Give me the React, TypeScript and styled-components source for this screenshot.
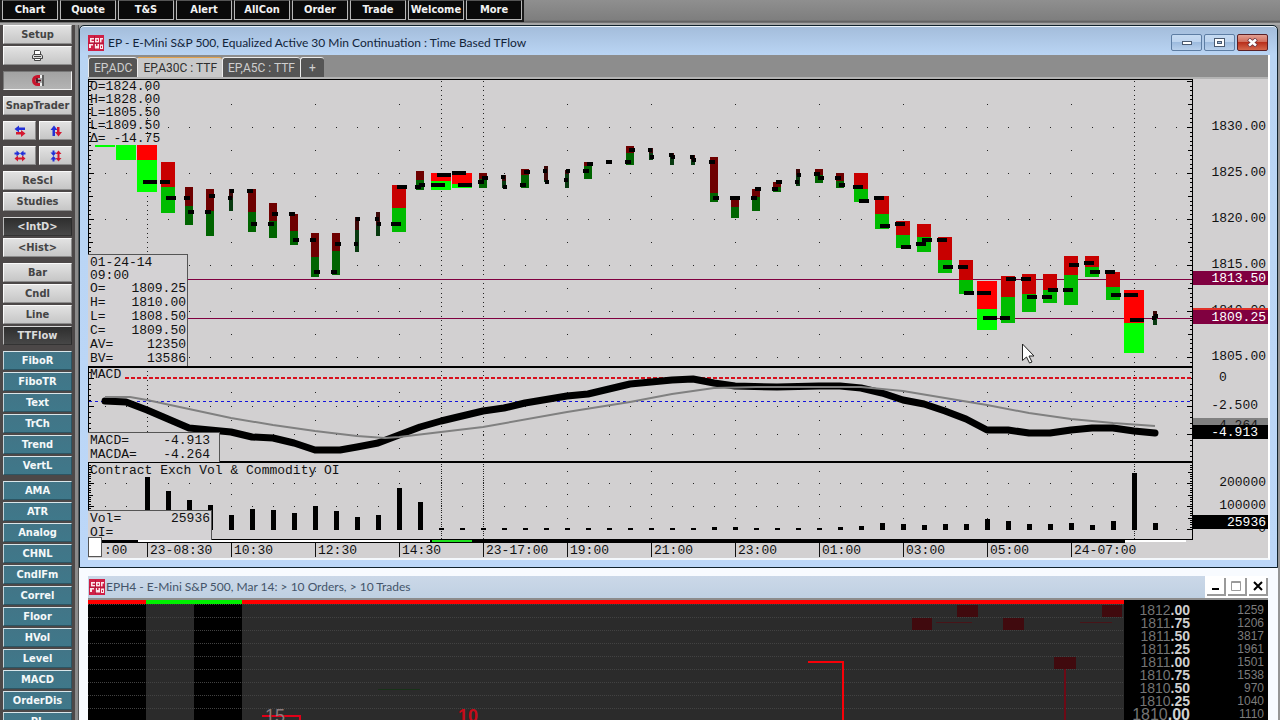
import React from "react";
import styled, { createGlobalStyle, css } from "styled-components";

const GlobalStyle = createGlobalStyle`
  *, *::before, *::after { box-sizing: border-box; }
  body { margin: 0; background: #969696; }
  button { font: inherit; padding: 0; margin: 0; cursor: pointer; }
`;

const mono = `"Liberation Mono", "DejaVu Sans Mono", monospace`;
const ui = `"DejaVu Sans Condensed", "DejaVu Sans", sans-serif`;
const caption = `Lato, "Open Sans", sans-serif`;

/* ---------- shell ---------- */

const Shell = styled.div`
  height: 100vh;
  display: flex;
  flex-direction: column;
  overflow: hidden;
  background: #969696;
`;

const TopBar = styled.nav`
  flex: none;
  height: 25px;
  display: flex;
  align-items: flex-start;
  background: linear-gradient(#8f8f8f, #7e7e7e 80%, #5a5a5a 88%, #a8a8a8 94%);
`;

const TopGroup = styled.div`
  display: flex;
  gap: 2px;
  padding: 0 2px 2px;
  background: #1a1a1a;
`;

const TopButton = styled.button`
  width: 56px;
  height: 20px;
  border: 1px solid #b8b8b8;
  border-top-color: #555;
  background: #0a0a0a;
  color: #f2f2f2;
  font: bold 11px/18px ${ui};
`;

const Body = styled.div`
  flex: 1;
  min-height: 0;
  display: flex;
`;

const Sidebar = styled.aside`
  flex: none;
  width: 79px;
  padding: 0 7px 0 3px;
  display: flex;
  flex-direction: column;
  gap: 6px;
  overflow: hidden;
  background: linear-gradient(90deg, #4c4848 0 75px, #8a8a8a 75px 78px, #555 78px);
`;

const ToolGroup = styled.div`
  flex: none;
  display: flex;
  flex-direction: column;
  gap: 2px;
`;

const ToolPair = styled.div`
  flex: none;
  display: flex;
  gap: 3px;
`;

type Tone = "light" | "pressed" | "dark" | "teal";

const tones = {
  light: css`
    background: linear-gradient(#e2e2e2, #c6c6c6);
    color: #444;
    border-color: #fafafa #8c8c8c #8c8c8c #fafafa;
  `,
  pressed: css`
    background: linear-gradient(#a2a2a2, #b4b4b4);
    color: #444;
    border-color: #777 #f2f2f2 #f2f2f2 #777;
  `,
  dark: css`
    background: linear-gradient(#2e2e2e, #474747);
    color: #dcdcdc;
    border-color: #d8d8d8 #2c2c2c #333 #b8b8b8;
  `,
  teal: css`
    background: linear-gradient(#427587, #3f788a);
    color: #f4f8f9;
    border-color: #d9e6ea #2c5563 #2c5563 #c2d4da;
  `,
};

const ToolButton = styled.button<{ $tone: Tone }>`
  flex: 1;
  width: 100%;
  min-height: 19px;
  height: 19px;
  display: flex;
  align-items: center;
  justify-content: center;
  border: 1px solid;
  font: bold 11px/17px ${ui};
  ${(p) => tones[p.$tone]}
`;

const Workspace = styled.main`
  flex: 1;
  min-width: 0;
  margin-right: 2px;
  display: flex;
  flex-direction: column;
`;

/* ---------- chart window ---------- */

const ChartWindow = styled.section`
  flex: none;
  border: 1px solid #10222c;
  border-radius: 5px 5px 0 0;
  padding: 0 7px 7px 8px;
  background: linear-gradient(#a3bcda, #b9d4f3 28px, #bcd7f8);
  box-shadow: inset 0 1px 0 #eaf3fb;
`;

const TitleBar = styled.header`
  height: 29px;
  padding: 4px 2px 0 0;
  display: flex;
  align-items: center;
  gap: 4px;
`;

const Title = styled.h1`
  flex: 1;
  margin: 0;
  white-space: nowrap;
  overflow: hidden;
  color: #12243a;
  font: 400 12px/18px ${caption};
`;

const WinButtons = styled.div`
  display: flex;
  gap: 2px;
`;

const GlassButton = styled.button<{ $danger?: boolean }>`
  width: 31px;
  height: 17px;
  display: flex;
  align-items: center;
  justify-content: center;
  border: 1px solid ${(p) => (p.$danger ? "#5a2026" : "#5d7da3")};
  border-radius: 2px;
  background: ${(p) =>
    p.$danger
      ? "linear-gradient(#e3a093, #cf6a58 48%, #b9301c 50%, #d4674c)"
      : "linear-gradient(#c6dbf2, #bcd3ee 48%, #9dbbde 50%, #b8d0ec)"};
`;

const Client = styled.div`
  border-right: 2px solid #fff;
  border-bottom: 2px solid #f4f8fc;
  background: #d2d0d1;
`;

const TabBar = styled.div`
  height: 22px;
  padding-top: 2px;
  display: flex;
  background: #8d8d8d;
`;

const Tab = styled.button<{ $active?: boolean }>`
  height: 20px;
  padding: 0 5px;
  border: solid #ececec;
  border-width: 1px 0 0 1px;
  border-top-color: ${(p) => (p.$active ? "#e2a24c" : "#ececec")};
  border-radius: 3px 3px 0 0;
  background: ${(p) => (p.$active ? "#c9c9c9" : "#555")};
  color: ${(p) => (p.$active ? "#2e2e2e" : "#cfcfcf")};
  font: 12px/16px Roboto, "Liberation Sans", sans-serif;
  white-space: pre;
`;

const TabEdge = styled.div`
  height: 2px;
  background: #b4b4b4;
`;

const ChartArea = styled.div`
  display: flex;
  color: #111;
  font: 13px/14px ${mono};
`;

const PlotColumn = styled.div`
  flex: 1;
  min-width: 0;
`;

const PlotCanvas = styled.div`
  position: relative;
  height: 464px;
`;

const PlotSvg = styled.svg`
  display: block;
  width: 100%;
  height: 100%;
`;

const Overlay = styled.div<{ $top: number }>`
  position: absolute;
  left: 2px;
  top: ${(p) => p.$top}px;
  white-space: pre;
`;

const SessionQuote = styled(Overlay)`
  line-height: 13px;
`;

const Readout = styled.dl<{ $top: number; $width: number }>`
  position: absolute;
  left: 0;
  top: ${(p) => p.$top}px;
  width: ${(p) => p.$width}px;
  margin: 0;
  padding: 1px 1px 0 2px;
  border: 1px solid #555;
  border-width: 1px 1px 0 0;
  background: #d4d2d4;
`;

const ReadoutRow = styled.div<{ $inset?: boolean; $tight?: boolean }>`
  height: ${(p) => (p.$tight ? 13 : 14)}px;
  line-height: ${(p) => (p.$tight ? 13 : 14)}px;
  display: flex;
  justify-content: space-between;
  padding-right: ${(p) => (p.$inset ? 8 : 0)}px;
  dt, dd { margin: 0; }
`;

const TimeAxis = styled.div`
  height: 15px;
  display: grid;
  grid-template-columns: 59fr repeat(12, 84fr) 38fr;
  line-height: 15px;
`;

const TimeLabel = styled.span`
  height: 14px;
  padding-left: 2px;
  border-left: 1px solid #111;
  white-space: nowrap;
`;

const TimeStart = styled.span`
  display: flex;
  gap: 2px;
`;

const ScrollKnob = styled.i`
  position: relative;
  width: 14px;
  height: 20px;
  margin-top: -6px;
  border: 1px solid #555;
  background: #fff;
`;

const ScaleColumn = styled.div`
  flex: none;
  width: 75px;
`;

const Scale = styled.div<{ $height: number; $top: number; $gap: number; $inset?: number }>`
  position: relative;
  height: ${(p) => p.$height}px;
  padding: ${(p) => p.$top}px ${(p) => p.$inset ?? 2}px 0 0;
  display: flex;
  flex-direction: column;
  gap: ${(p) => p.$gap}px;
  overflow: hidden;
  text-align: right;
  white-space: pre;
`;

const ScaleTag = styled.span<{ $top: number; $bg: string; $color?: string; $inset?: number; $line?: boolean }>`
  position: absolute;
  left: 0;
  right: 0;
  top: ${(p) => p.$top}px;
  height: 14px;
  padding-right: ${(p) => p.$inset ?? 2}px;
  background: ${(p) => p.$bg};
  color: ${(p) => p.$color ?? "#fff"};
  line-height: 15px;
  box-shadow: ${(p) => (p.$line ? "0 -2px 0 #e03028" : "none")};
`;

/* ---------- order window ---------- */

const OrderWindow = styled.section`
  flex: 1;
  min-height: 0;
  display: flex;
  flex-direction: column;
  padding: 8px 10px 0 9px;
  background: #f8fbff;
`;

const OrderTitleBar = styled.header`
  flex: none;
  height: 22px;
  display: flex;
  align-items: center;
  gap: 1px;
  padding-left: 1px;
  background: linear-gradient(#cbd8e8, #bfd0e2);
`;

const OrderTitle = styled(Title)`
  color: #44546a;
`;

const OrderButtons = styled.div`
  align-self: stretch;
  display: flex;
  align-items: center;
  gap: 2px;
  padding-left: 2px;
  background: #fff;
`;

const BevelButton = styled.button`
  width: 19px;
  height: 18px;
  display: flex;
  align-items: center;
  justify-content: center;
  border: solid #9a9a9a;
  border-width: 0 2px 2px 0;
  background: #fff;
`;

const OrderClient = styled.div`
  flex: 1;
  min-height: 0;
  display: flex;
  overflow: hidden;
  border-top: 2px solid #8c8c8c;
  background: #000;
`;

const OrderCanvas = styled.div`
  position: relative;
  flex: 1;
  min-width: 0;
  height: 120px;
`;

const OrderMark = styled.span<{ $left: number; $color: string; $bold?: boolean }>`
  position: absolute;
  left: ${(p) => p.$left}px;
  top: 107px;
  color: ${(p) => p.$color};
  font: ${(p) => (p.$bold ? 700 : 400)} 18px/18px "Liberation Sans", sans-serif;
`;

const Ladder = styled.table`
  flex: none;
  align-self: flex-start;
  width: 144px;
  margin-top: 4px;
  border-collapse: collapse;
  table-layout: fixed;
  font: 14px/13px "Liberation Sans", sans-serif;
  td { height: 13px; padding: 0; text-align: right; }
`;

const PriceCell = styled.td<{ $large?: boolean }>`
  width: 66px;
  color: #747474;
  font-size: ${(p) => (p.$large ? 16 : 14)}px;
  b { color: #cfcfcf; }
`;

const SizeCell = styled.td`
  color: #7c7c7c;
  font-size: 12px;
  && { padding-right: 4px; }
`;

/* ---------- icons ---------- */

const BrandIcon = () => (
  <svg width="16" height="16" viewBox="0 0 16 16" aria-hidden="true">
    <rect width="16" height="16" fill="#cf1f45" />
    <g fill="#fbe6ea">
      <path d="M2 3h4v1.500H3.500V6H6v1.500H2zM7 3h4v4.500H7zM12 3h3v1.500h-1.500v3H12z" />
      <path d="M1 9h4v1.500H3V13H1zM6 9h2v2h1.500V9H11v4.500H6zM12 9.500h3V14h-3z" />
    </g>
    <g fill="#cf1f45">
      <rect x="8.500" y="4.500" width="1.500" height="1.500" />
      <rect x="13" y="11" width="1" height="2" />
    </g>
    <path d="M0 8.200h16M6.500 1v14" stroke="#a81236" strokeWidth="0.800" />
  </svg>
);

const PrinterIcon = () => (
  <svg width="13" height="13" viewBox="0 0 13 13" fill="none" stroke="#444" aria-hidden="true">
    <path d="M3.500 5.500V1.500h5l1 1v3" fill="#fff" />
    <path d="M2.500 5.500h8l1 1.500v2.500h-10V7z" fill="#ddd" />
    <path d="M3.500 9.500h6v2h-6zM3 7.500h7" fill="#fff" />
  </svg>
);

const MagnetIcon = () => (
  <svg width="12" height="11" viewBox="0 0 12 11" aria-hidden="true">
    <path d="M8 0H5.500a5.500 5.500 0 0 0 0 11H8V8H6a2.500 2.500 0 0 1 0-5h2z" fill="#c8142c" />
    <path d="M4 5.500h5M5 3v5" stroke="#4a0a18" strokeWidth="1.500" />
    <path d="M8 0h2v3H8zM8 8h2v3H8z" fill="#eee" />
    <path d="M11 0v11" stroke="#444" strokeWidth="1.500" />
  </svg>
);

const blue = "#2330d8";
const red = "#d41830";

const ArrowsIcon = ({ kind }: { kind: "shiftH" | "shiftV" | "squeezeH" | "squeezeV" }) => {
  const vertical = kind.endsWith("V");
  const squeeze = kind.startsWith("squeeze");
  return (
    <svg width="12" height="12" viewBox="0 0 12 12" aria-hidden="true">
      <g transform={vertical ? "matrix(0 1 1 0 0 0)" : undefined}>
        {squeeze ? (
          <>
            <path d="M0.500 2.500h2V0.500L6 3.500 2.500 6.500V4.500h-2z" fill={blue} />
            <path d="M11.500 2.500h-2V0.500L6 3.500l3.500 3V4.500h2z" fill={blue} />
            <path d="M6 7.500H4V5.500L0.500 8.500 4 11.500v-2h2z" fill={red} />
            <path d="M6 7.500h2V5.500l3.500 3L8 11.500v-2H6z" fill={red} />
          </>
        ) : (
          <>
            <path d="M11 2.500H5V0.500L0.500 4 5 7.500V5h6z" fill={blue} />
            <path d="M2 7h5V5l4.500 3.500L7 12V9.500H2z" fill={red} />
          </>
        )}
      </g>
    </svg>
  );
};

/* ---------- chart data (canvas coordinates) ---------- */

// [centre, body width, top, bid/ask split, bottom, open, close]
type Bar = [number, number, number, number, number, number, number];

const bars: Bar[] = [
  [105, 20, 145, 145, 147, 0, 0], [126, 20, 145, 145, 160, 0, 0],
  [147, 20, 145, 160, 192, 0, 182], [168, 14, 162, 187, 213, 182, 198],
  [189, 8, 187, 206, 225, 198, 212], [210, 8, 189, 211, 236, 212, 196],
  [231, 4, 189, 198, 211, 198, 191], [252, 8, 189, 212, 232, 191, 224],
  [273, 8, 203, 221, 238, 224, 214], [294, 8, 214, 231, 245, 214, 240],
  [315, 8, 233, 257, 277, 240, 272], [336, 8, 233, 251, 275, 272, 244],
  [357, 4, 217, 230, 252, 244, 219], [378, 4, 212, 225, 236, 219, 224],
  [399, 14, 185, 208, 232, 224, 187], [420, 8, 171, 180, 190, 187, 185],
  [441, 20, 173, 181, 190, 185, 175], [462, 20, 173, 184, 188, 173, 185],
  [483, 8, 173, 179, 188, 182, 178], [504, 4, 175, 181, 188, 177, 187],
  [525, 8, 169, 175, 188, 185, 172], [546, 4, 166, 180, 182, 171, 182],
  [567, 4, 170, 174, 188, 180, 171], [588, 8, 162, 166, 179, 171, 164],
  [609, 4, 160, 162, 164, 162, 162], [630, 8, 146, 153, 165, 162, 150],
  [651, 4, 148, 153, 160, 150, 157], [672, 4, 153, 157, 165, 155, 157],
  [693, 4, 155, 160, 165, 157, 160], [714, 8, 157, 193, 202, 162, 198],
  [735, 8, 196, 207, 218, 198, 198], [756, 8, 189, 197, 211, 198, 189],
  [777, 8, 182, 187, 192, 189, 182], [798, 4, 169, 175, 186, 182, 175],
  [819, 8, 169, 175, 183, 174, 178], [840, 8, 173, 181, 188, 178, 185],
  [861, 14, 173, 189, 202, 187, 201], [882, 14, 196, 214, 229, 198, 226],
  [903, 14, 221, 235, 248, 224, 247], [924, 14, 224, 237, 252, 244, 240],
  [945, 14, 237, 260, 273, 240, 267], [966, 14, 260, 280, 294, 267, 293],
  [987, 20, 281, 309, 330, 293, 318], [1008, 14, 276, 297, 323, 318, 279],
  [1029, 14, 274, 294, 312, 279, 297], [1050, 14, 274, 290, 303, 297, 290],
  [1071, 14, 256, 275, 305, 290, 265], [1092, 14, 256, 267, 277, 263, 272],
  [1113, 14, 272, 287, 300, 272, 295], [1134, 20, 290, 323, 353, 295, 320],
  [1155, 4, 311, 317, 325, 318, 316],
];

const bodyColors: Record<number, [string, string]> = {
  20: ["#ff0000", "#00ff00"],
  14: ["#c80000", "#00bc00"],
  8: ["#6e0000", "#006400"],
  4: ["#3e0808", "#083a10"],
};

const tickWidths: Record<number, [number, number]> = {
  20: [10, 14],
  14: [8, 10],
  8: [5, 6],
  4: [3, 4],
};

const volumeTops: Record<number, number> = {
  147: 477, 168: 491, 189: 500, 210: 505, 231: 515, 252: 509, 273: 510, 294: 513,
  315: 506, 336: 511, 357: 517, 378: 515, 399: 488, 420: 502, 714: 527, 735: 527,
  840: 527, 861: 526, 882: 523, 903: 524, 924: 525, 945: 524, 966: 524, 987: 519,
  1008: 521, 1029: 524, 1050: 524, 1071: 523, 1092: 525, 1113: 521, 1134: 473, 1155: 523,
};

const macd =
  "105,401 126,402 147,410 168,419 189,428 210,430 231,432 252,437 273,438 294,443 315,450 340,450 357,447 378,443 399,435 420,427 441,421 483,411 504,408 525,403 567,396 588,394 609,389 630,384 651,382 672,380 693,379 714,383 735,386 777,387 819,386 840,386 861,388 882,393 903,400 924,404 945,411 966,419 987,430 1008,430 1029,433 1050,433 1071,430 1092,428 1113,428 1134,431 1155,433";

const macdAverage =
  "105,397 130,397 147,400 189,409 231,418 273,425 315,431 357,436 385,438 399,437 441,432 483,427 567,412 630,402 672,394 714,388 756,387 861,387 903,391 945,398 987,405 1029,413 1071,419 1113,423 1155,426";

const columns = bars.map((b) => b[0]).concat(1176);
const labelColumns = [231, 315, 399, 567, 651, 735, 819, 903, 987, 1071];
const dot = (x: number, y: number) => `M${x} ${Math.round(y)}h1v1h-1z`;

const gridPath = [
  ...[127, 173, 219, 265, 311, 357, 406, 434, 483, 506, 529].flatMap((y) => columns.map((x) => dot(x, y))),
  ...[104, 150, 196, 242, 288, 334, 392, 420, 448, 471, 494, 518].flatMap((y) => labelColumns.map((x) => dot(x, y))),
  ...[147, 441, 483, 1134].flatMap((x) =>
    Array.from({ length: 83 }, (_, i) => dot(x, 81 + i * 4.6)).concat(
      x === 147 ? [] : Array.from({ length: 33 }, (_, i) => dot(x, 464 + i * 2.3)),
    ),
  ),
].join("");

const tickPath = (() => {
  const out: string[] = [];
  const add = (y: number, w: number) => {
    const r = Math.round(y);
    out.push(`M89 ${r}h${w}v1h-${w}z`, `M1192 ${r}h-${w}v1h${w}z`);
  };
  for (let i = -10; i <= 51; i++) add(127 + i * 4.6, i % 10 === 0 ? 5 : i % 5 === 0 ? 4 : 2);
  for (let i = -1; i <= 14; i++) add(378 + i * 5.6, i % 5 === 0 ? 5 : 2);
  for (let i = 0; i <= 28; i++) add(529 - i * 2.3, i % 10 === 0 ? 5 : i % 5 === 0 ? 4 : 2);
  return out.join("");
})();

const PriceBar = ({ bar }: { bar: Bar }) => {
  const [x, w, top, split, bottom, open, close] = bar;
  const [up, down] = bodyColors[w];
  const [reach, tick] = tickWidths[w];
  const left = x - w / 2;
  return (
    <g>
      <rect x={left} y={top} width={w} height={split - top} fill={up} />
      <rect x={left} y={split} width={w} height={bottom - split} fill={down} />
      {open > 0 && <rect x={x - reach} y={open - 2} width={tick} height={4} rx={1} />}
      {close > 0 && <rect x={x + reach - tick} y={close - 2} width={tick} height={4} rx={1} />}
    </g>
  );
};

const Plot = () => (
  <PlotSvg viewBox="88 79 1105 464" preserveAspectRatio="none" shapeRendering="crispEdges" role="img" aria-label="Price, MACD and volume chart">
    <rect x="88" y="79" width="1105" height="464" fill="#d2d0d1" />
    <path d={gridPath} fill="#222" />
    <path d={tickPath} />
    <path d="M188 279h1004v1H188zM188 318h1004v1H188z" fill="#800040" />
    {bars.map((b) => <PriceBar key={b[0]} bar={b} />)}
    <path d="M125 378H1192" stroke="#d8101c" strokeWidth="2" strokeDasharray="4 2" />
    <path d="M89 401.500H1192" stroke="#1414dc" strokeDasharray="3 3" />
    <polyline points={macd} fill="none" stroke="#000" strokeWidth="7" strokeLinecap="round" strokeLinejoin="round" shapeRendering="auto" />
    <polyline points={macdAverage} fill="none" stroke="#808080" strokeWidth="2" shapeRendering="auto" />
    {columns.filter((x) => x >= 147 && x <= 1155).map((x) => {
      const top = volumeTops[x] ?? 528;
      return <rect key={x} x={x - 2} y={top} width={5} height={530 - top} />;
    })}
    <path d="M88 79h1105v1H88zM88 79h1v461h-1zM1192 79h1v461h-1zM88 366h1105v2H88zM88 461h1105v2H88z" />
    <rect x="101" y="539" width="1092" height="1" />
    <rect x="101" y="540" width="1024" height="3" />
    <rect x="138" y="540" width="292" height="2" fill="#fff" />
    <rect x="432" y="540" width="40" height="2" fill="#1ee01e" />
    <rect x="1125" y="540" width="61" height="2" fill="#fff" />
    <path d="M1022.500 344v16.500l4-3.500 3 6 2.500-1-3-6h5z" fill="#fff" stroke="#222" shapeRendering="auto" />
  </PlotSvg>
);

const OrderFlow = () => (
  <PlotSvg viewBox="88 600 1036 120" preserveAspectRatio="none" shapeRendering="crispEdges" role="img" aria-label="Order flow">
    <rect x="88" y="600" width="1036" height="120" fill="#2b2b2b" />
    <path d="M88 600h58v120H88zM194 600h48v120h-48z" fill="#000" />
    {[604, 617, 630, 643, 656, 669, 682, 695, 708].map((y) => (
      <path key={y} d={`M88 ${y}.500H1124`} stroke="#424242" strokeDasharray="1 1" />
    ))}
    <path d="M88 600h1036v4H88z" fill="#f00" />
    <path d="M146 600h96v4h-96z" fill="#00f000" />
    <g fill="#400a0e">
      <rect x="912" y="618" width="20" height="12" />
      <rect x="957" y="605" width="21" height="12" />
      <rect x="1003" y="618" width="21" height="12" />
      <rect x="1102" y="605" width="20" height="12" />
      <rect x="1054" y="657" width="22" height="12" />
    </g>
    <path d="M936 622.500h36M1080 622.500h32" stroke="#481418" />
    <path d="M1065 669v51" stroke="#6c0a16" strokeWidth="2" />
    <path d="M808 662h35v58" fill="none" stroke="#f80008" strokeWidth="2" />
    <path d="M262 716h38v4" fill="none" stroke="#e00018" strokeWidth="2" />
    <path d="M378 689.500h42" stroke="#173217" />
  </PlotSvg>
);

/* ---------- content ---------- */

const topItems = ["Chart", "Quote", "T&S", "Alert", "AllCon", "Order", "Trade", "Welcome", "More"];

const toolGroups: { tone: Tone; label: string }[][] = [
  [{ tone: "light", label: "ReScl" }, { tone: "light", label: "Studies" }],
  [{ tone: "dark", label: "<IntD>" }, { tone: "light", label: "<Hist>" }],
  [
    { tone: "light", label: "Bar" }, { tone: "light", label: "Cndl" },
    { tone: "light", label: "Line" }, { tone: "dark", label: "TTFlow" },
  ],
  ["FiboR", "FiboTR", "Text", "TrCh", "Trend", "VertL"].map((label) => ({ tone: "teal" as Tone, label })),
  ["AMA", "ATR", "Analog", "CHNL", "CndlFm", "Correl", "Floor", "HVol", "Level", "MACD", "OrderDis", "PL"].map(
    (label) => ({ tone: "teal" as Tone, label }),
  ),
];

const barReadout = [
  ["O=", "1809.25"], ["H=", "1810.00"], ["L=", "1808.50"],
  ["C=", "1809.50"], ["AV=", "12350"], ["BV=", "13586"],
];

const times = ["23-08:30", "10:30", "12:30", "14:30", "23-17:00", "19:00", "21:00", "23:00", "01:00", "03:00", "05:00", "24-07:00"];

const ladder = [
  ["1812", ".00", "1259"], ["1811", ".75", "1206"], ["1811", ".50", "3817"],
  ["1811", ".25", "1961"], ["1811", ".00", "1501"], ["1810", ".75", "1538"],
  ["1810", ".50", "970"], ["1810", ".25", "1040"], ["1810", ".00", "1110"],
];

export default function App() {
  return (
    <Shell>
      <GlobalStyle />
      <TopBar>
        <TopGroup>
          {topItems.map((t) => <TopButton key={t}>{t}</TopButton>)}
        </TopGroup>
      </TopBar>
      <Body>
        <Sidebar>
          <ToolGroup>
            <ToolButton $tone="light">Setup</ToolButton>
            <ToolButton $tone="light" aria-label="Print"><PrinterIcon /></ToolButton>
          </ToolGroup>
          <ToolGroup><ToolButton $tone="pressed" aria-label="Magnet"><MagnetIcon /></ToolButton></ToolGroup>
          <ToolGroup><ToolButton $tone="light">SnapTrader</ToolButton></ToolGroup>
          <ToolPair>
            <ToolButton $tone="light" aria-label="Shift horizontally"><ArrowsIcon kind="shiftH" /></ToolButton>
            <ToolButton $tone="light" aria-label="Shift vertically"><ArrowsIcon kind="shiftV" /></ToolButton>
          </ToolPair>
          <ToolPair>
            <ToolButton $tone="light" aria-label="Compress horizontally"><ArrowsIcon kind="squeezeH" /></ToolButton>
            <ToolButton $tone="light" aria-label="Compress vertically"><ArrowsIcon kind="squeezeV" /></ToolButton>
          </ToolPair>
          {toolGroups.map((group) => (
            <ToolGroup key={group[0].label}>
              {group.map((t) => <ToolButton key={t.label} $tone={t.tone}>{t.label}</ToolButton>)}
            </ToolGroup>
          ))}
        </Sidebar>
        <Workspace>
          <ChartWindow>
            <TitleBar>
              <BrandIcon />
              <Title>EP - E-Mini S&amp;P 500, Equalized Active 30 Min Continuation : Time Based TFlow</Title>
              <WinButtons>
                <GlassButton aria-label="Minimize">
                  <svg width="12" height="6"><rect x="1.500" y="1.500" width="9" height="3" fill="#fff" stroke="#4a5a70" /></svg>
                </GlassButton>
                <GlassButton aria-label="Maximize">
                  <svg width="11" height="10"><rect x="0.500" y="0.500" width="10" height="8" fill="#fff" stroke="#4a5a70" /><rect x="3.500" y="3.500" width="4" height="2" fill="#9dbbde" stroke="#4a5a70" /></svg>
                </GlassButton>
                <GlassButton $danger aria-label="Close">
                  <svg width="11" height="9"><path d="M1.500 1l8 7M9.500 1l-8 7" stroke="#6b3540" strokeWidth="4" /><path d="M2 1.500l7 6M9 1.500l-7 6" stroke="#fff" strokeWidth="2.500" /></svg>
                </GlassButton>
              </WinButtons>
            </TitleBar>
            <Client>
              <TabBar>
                <Tab>EP,ADC</Tab>
                <Tab $active>EP,A30C : TTF</Tab>
                <Tab>EP,A5C : TTF</Tab>
                <Tab> + </Tab>
              </TabBar>
              <TabEdge />
              <ChartArea>
                <PlotColumn>
                  <PlotCanvas>
                    <Plot />
                    <SessionQuote $top={1}>{"O=1824.00\nH=1828.00\nL=1805.50\nL=1809.50\nΔ= -14.75"}</SessionQuote>
                    <Readout $top={175} $width={100}>
                      <ReadoutRow $tight><dt>01-24-14</dt></ReadoutRow>
                      <ReadoutRow $tight><dt>09:00</dt></ReadoutRow>
                      {barReadout.map(([k, v]) => (
                        <ReadoutRow key={k}><dt>{k}</dt><dd>{v}</dd></ReadoutRow>
                      ))}
                    </Readout>
                    <Overlay $top={289}>MACD</Overlay>
                    <Readout $top={353} $width={132}>
                      <ReadoutRow $inset><dt>MACD=</dt><dd>-4.913</dd></ReadoutRow>
                      <ReadoutRow $inset><dt>MACDA=</dt><dd>-4.264</dd></ReadoutRow>
                    </Readout>
                    <Overlay $top={385}>Contract Exch Vol &amp; Commodity OI</Overlay>
                    <Readout $top={431} $width={124}>
                      <ReadoutRow><dt>Vol=</dt><dd>25936</dd></ReadoutRow>
                      <ReadoutRow><dt>OI=</dt></ReadoutRow>
                    </Readout>
                  </PlotCanvas>
                  <TimeAxis>
                    <TimeStart><ScrollKnob />:00</TimeStart>
                    {times.map((t) => <TimeLabel key={t}>{t}</TimeLabel>)}
                  </TimeAxis>
                </PlotColumn>
                <ScaleColumn>
                  <Scale $height={288} $top={41} $gap={32}>
                    {["1830.00", "1825.00", "1820.00", "1815.00", "1810.00", "1805.00"].map((p) => <span key={p}>{p}</span>)}
                    <ScaleTag $top={192} $bg="#800040">1813.50</ScaleTag>
                    <ScaleTag $top={231} $bg="#800040" $line>1809.25</ScaleTag>
                  </Scale>
                  <Scale $height={95} $top={4} $gap={14} $inset={10}>
                    <span>{" 0    "}</span>
                    <span>-2.500</span>
                    <ScaleTag $top={51} $bg="#808080" $color="#1a1a1a" $inset={10}>-4.264</ScaleTag>
                    <ScaleTag $top={58} $bg="#000" $inset={10}>-4.913</ScaleTag>
                  </Scale>
                  <Scale $height={79} $top={14} $gap={9}>
                    <span>200000</span>
                    <span>100000</span>
                    <span>0</span>
                    <ScaleTag $top={53} $bg="#000">25936</ScaleTag>
                  </Scale>
                </ScaleColumn>
              </ChartArea>
            </Client>
          </ChartWindow>
          <OrderWindow>
            <OrderTitleBar>
              <BrandIcon />
              <OrderTitle as="h2">EPH4 - E-Mini S&amp;P 500, Mar 14: &gt; 10 Orders, &gt; 10 Trades</OrderTitle>
              <OrderButtons>
                <BevelButton aria-label="Minimize"><svg width="10" height="10"><path d="M1 8h7" stroke="#000" strokeWidth="2" /></svg></BevelButton>
                <BevelButton aria-label="Restore"><svg width="11" height="11"><path d="M.5.5h9v9h-9zM0 1.500h10" fill="none" stroke="#9a9a9a" /></svg></BevelButton>
                <BevelButton aria-label="Close"><svg width="10" height="10"><path d="M1 1l8 8M9 1L1 9" stroke="#000" strokeWidth="2" /></svg></BevelButton>
              </OrderButtons>
            </OrderTitleBar>
            <OrderClient>
              <OrderCanvas>
                <OrderFlow />
                <OrderMark $left={177} $color="#8a7a7a">15</OrderMark>
                <OrderMark $left={370} $color="#c80a18" $bold>10</OrderMark>
              </OrderCanvas>
              <Ladder>
                <tbody>
                  {ladder.map(([whole, frac, size], i) => (
                    <tr key={whole + frac}>
                      <PriceCell $large={i === 8}>{whole}<b>{frac}</b></PriceCell>
                      <SizeCell>{size}</SizeCell>
                    </tr>
                  ))}
                </tbody>
              </Ladder>
            </OrderClient>
          </OrderWindow>
        </Workspace>
      </Body>
    </Shell>
  );
}
